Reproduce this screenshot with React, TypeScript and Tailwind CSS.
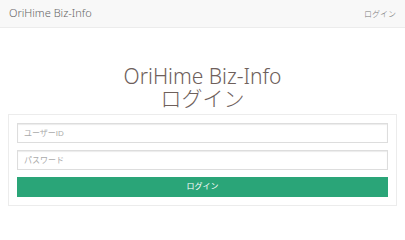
const FONT = "font-['Liberation_Sans','Noto_Sans_CJK_JP',sans-serif]";
const LIGHT = "font-['Noto_Sans','Noto_Sans_CJK_JP',sans-serif] font-light";

export default function App() {
  return (
    <div className={`min-h-screen bg-white ${FONT}`}>
      <header className="flex h-[28px] items-center justify-between border-b border-[#ececec] bg-[#f8f8f8] px-[9px]">
        <span className={`text-[11px] text-[#666] ${LIGHT}`}>OriHime Biz-Info</span>
        <a href="#" className={`text-[8px] text-[#777] ${LIGHT}`}>
          ログイン
        </a>
      </header>

      <h1 className={`mt-[37px] text-center text-[21px] leading-[22px] text-[#6e605b] ${LIGHT}`}>
        OriHime Biz-Info
        <br />
        ログイン
      </h1>

      <form className="mx-[8px] mt-[5px] flex flex-col gap-[7px] border border-[#ececec] px-[8px] pt-[8px] pb-[8px]">
        <input
          type="text"
          placeholder="ユーザーID"
          className="h-[20px] w-full border border-[#ddd] bg-white px-[6px] text-[8px] text-[#555] shadow-[inset_0_1px_1px_rgba(0,0,0,0.08)] outline-none placeholder:text-[#aaa]"
        />
        <input
          type="password"
          placeholder="パスワード"
          className="h-[20px] w-full border border-[#ddd] bg-white px-[6px] text-[8px] text-[#555] shadow-[inset_0_1px_1px_rgba(0,0,0,0.08)] outline-none placeholder:text-[#aaa]"
        />
        <button
          type="button"
          className="h-[20px] w-full bg-[#2aa578] text-[8px] text-white"
        >
          ログイン
        </button>
      </form>
    </div>
  );
}
